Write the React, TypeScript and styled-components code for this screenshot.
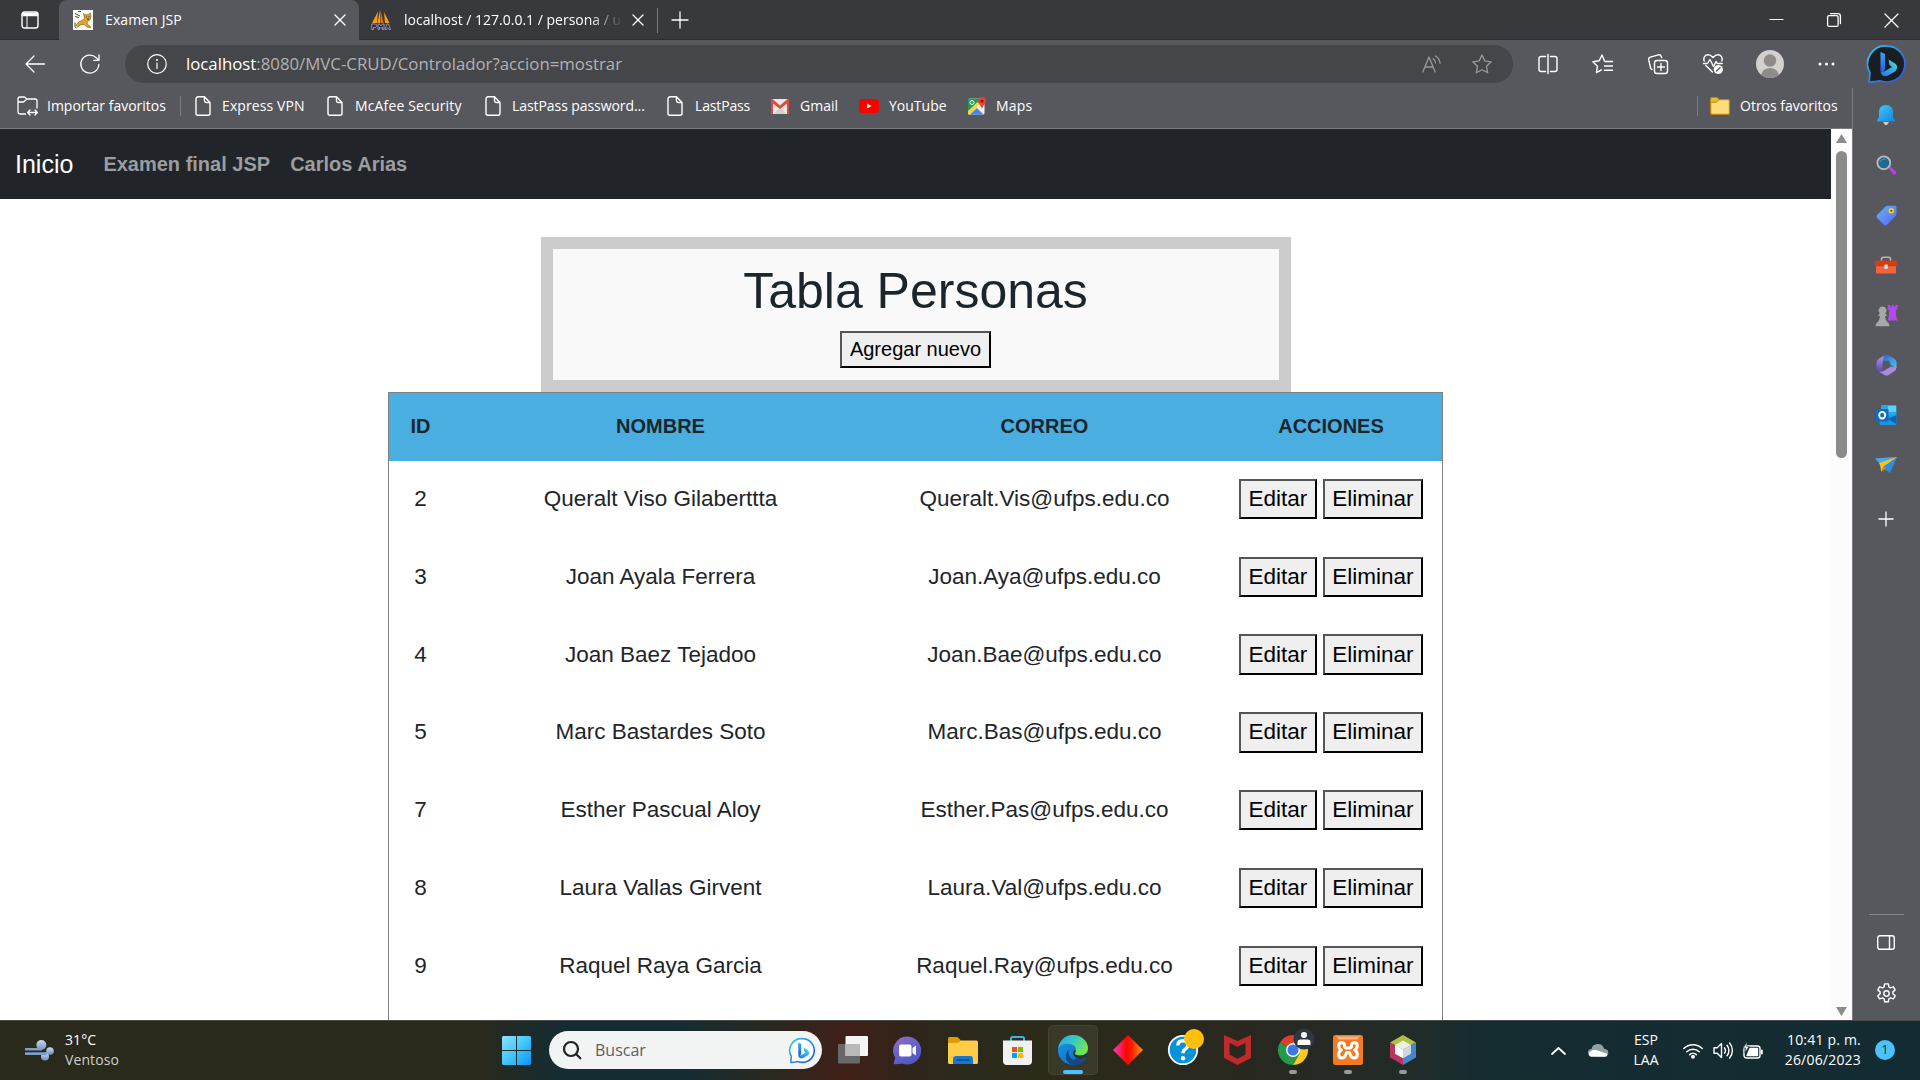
import React from "react";
import styled, { createGlobalStyle } from "styled-components";

const GlobalStyle = createGlobalStyle`
  * { box-sizing: border-box; }
  html, body { margin: 0; padding: 0; overflow: hidden; background: #fff; }
  svg { display: block; flex: none; overflow: visible; }
`;

const uiFont = `"Open Sans", "Noto Sans", sans-serif`;
const pageFont = `"Liberation Sans", Arial, sans-serif`;

/* ---------- shared ---------- */

const Desktop = styled.div`
  width: 1920px;
  height: 1080px;
  display: flex;
  flex-direction: column;
  overflow: hidden;
  font-family: ${uiFont};
  color: #fff;
`;

const Slot = styled.div<{ $w: number }>`
  width: ${(p) => p.$w}px;
  height: 100%;
  flex: none;
  display: flex;
  align-items: center;
  justify-content: center;
`;

const Divider = styled.div<{ $h: number }>`
  width: 1px;
  height: ${(p) => p.$h}px;
  flex: none;
  background: #7d7e81;
`;

/* ---------- tab strip ---------- */

const TabStrip = styled.header`
  height: 40px;
  flex: none;
  display: flex;
  align-items: stretch;
  background: #38393c;
  box-shadow: inset 0 -1px 0 #2d2e30;
`;

const Tab = styled.div<{ $active?: boolean; $w: number }>`
  width: ${(p) => p.$w}px;
  display: flex;
  align-items: center;
  padding: 0 14px 0 ${(p) => (p.$active ? 14 : 12)}px;
  border-radius: 8px 8px 0 0;
  background: ${(p) => (p.$active ? "#57585d" : "transparent")};
`;

const TabTitle = styled.span<{ $fade?: boolean; $ls?: number }>`
  flex: 1;
  margin-left: ${(p) => (p.$fade ? 13 : 12)}px;
  font-size: 14px;
  line-height: 20px;
  letter-spacing: ${(p) => p.$ls ?? 0}px;
  white-space: nowrap;
  overflow: hidden;
  ${(p) =>
    p.$fade &&
    "mask-image: linear-gradient(to right, #000 calc(100% - 44px), transparent calc(100% - 10px));"}
`;

const WindowControls = styled.div`
  margin-left: auto;
  display: flex;
`;

/* ---------- browser body ---------- */

const BrowserBody = styled.div`
  flex: 1;
  min-height: 0;
  display: flex;
  background: #57585d;
`;

const MainColumn = styled.div`
  width: 1852px;
  flex: none;
  display: flex;
  flex-direction: column;
`;

const Toolbar = styled.div`
  height: 48px;
  flex: none;
  display: flex;
  align-items: center;
  padding-left: 7px;
`;

const AddressBar = styled.div`
  width: 1388px;
  height: 38px;
  margin-left: 8px;
  margin-right: 7px;
  border-radius: 19px;
  background: #454649;
  display: flex;
  align-items: center;
  padding-left: 22px;
  padding-right: 6px;
`;

const Url = styled.span`
  flex: 1;
  margin-left: 19px;
  font-size: 16.8px;
  line-height: 24px;
  white-space: nowrap;
  color: #b1b2b4;
  b { font-weight: 400; color: #fff; }
`;

const Avatar = styled.div`
  width: 28px;
  height: 28px;
  border-radius: 50%;
  overflow: hidden;
  background: #d3d1ce;
`;

const BookmarksBar = styled.div`
  height: 41px;
  flex: none;
  display: flex;
  align-items: center;
  padding: 0 14px 4px 17px;
  border-bottom: 1px solid #7c7d80;
`;

const Bookmark = styled.div<{ $w: number; $gap: number; $ls?: number }>`
  width: ${(p) => p.$w}px;
  flex: none;
  display: flex;
  align-items: center;
  gap: ${(p) => p.$gap}px;
  font-size: 14px;
  line-height: 20px;
  letter-spacing: ${(p) => p.$ls ?? 0}px;
  white-space: nowrap;
`;

const OtherBookmarks = styled.div`
  margin-left: auto;
  display: flex;
  align-items: center;
  gap: 12px;
`;

/* ---------- edge sidebar ---------- */

const Sidebar = styled.aside`
  flex: 1;
  display: flex;
  flex-direction: column;
`;

const BingSlot = styled.div`
  height: 48px;
  display: flex;
  align-items: center;
  justify-content: center;
  padding-left: 1px;
`;

const SidebarRail = styled.div`
  flex: 1;
  border-left: 1px solid #7c7d80;
  display: flex;
  flex-direction: column;
  align-items: center;
  padding-top: 2px;
  padding-right: 1px;
`;

const RailItem = styled.div<{ $h?: number }>`
  height: ${(p) => p.$h ?? 50}px;
  display: flex;
  align-items: center;
`;

const RailFooter = styled.div`
  margin-top: auto;
  display: flex;
  flex-direction: column;
  align-items: center;
  padding-bottom: 3px;
`;

const RailLine = styled.div`
  width: 35px;
  height: 1px;
  background: #86878a;
`;

/* ---------- web page ---------- */

const Viewport = styled.div`
  flex: 1;
  min-height: 0;
  display: flex;
  background: #fff;
  overflow: hidden;
`;

const Page = styled.main`
  width: 1831px;
  display: flex;
  flex-direction: column;
  align-items: center;
  font-family: ${pageFont};
  color: #212529;
`;

const Navbar = styled.nav`
  width: 100%;
  height: 70px;
  flex: none;
  display: flex;
  align-items: center;
  padding-left: 15px;
  background: #212529;
`;

const Brand = styled.span`
  font-size: 25px;
  line-height: 38px;
  color: #fff;
  margin-right: 30px;
  padding-bottom: 1px;
`;

const NavLink = styled.span`
  font-size: 20px;
  line-height: 30px;
  font-weight: 700;
  color: #9b9d9f;
  margin-right: 20px;
`;

const TitleCard = styled.section`
  width: 750px;
  height: 155px;
  flex: none;
  margin-top: 38px;
  border: 12px solid #ccc;
  background: #f9f9f9;
  display: flex;
  flex-direction: column;
  align-items: center;
`;

const Title = styled.h1`
  margin: 12px 0 10px;
  font-size: 50px;
  line-height: 60px;
  font-weight: 400;
  color: #1b262c;
`;

const PageButton = styled.button<{ $large?: boolean }>`
  height: ${(p) => (p.$large ? "40.4px" : "37px")};
  padding: 0 7.5px ${(p) => (p.$large ? 0 : 2)}px;
  margin: 0;
  flex: none;
  display: flex;
  align-items: center;
  font-family: ${pageFont};
  font-size: ${(p) => (p.$large ? 22.5 : 20)}px;
  line-height: 26px;
  color: #000;
  background: #efefef;
  border: 2px solid;
  border-color: #555 #000 #000 #555;
  border-radius: 0;
`;

const Table = styled.div`
  width: 1055px;
  flex: none;
  border: 1px solid #808080;
`;

const Row = styled.div`
  height: 77.83px;
  display: grid;
  grid-template-columns: 63px 417px 351px 222px;
  align-items: center;
  justify-items: center;
  font-size: 22.5px;
  padding-bottom: 2px;
`;

const HeadRow = styled(Row)`
  height: 68px;
  background: #4aaee0;
  color: #1b262c;
  font-size: 20px;
  font-weight: 700;
  padding-bottom: 1px;
`;

const Actions = styled.div`
  display: flex;
  gap: 6px;
`;

const Scrollbar = styled.div`
  width: 21px;
  display: flex;
  flex-direction: column;
  align-items: center;
  background: #fcfcfc;
  padding: 5px 0 4px;
`;

const Thumb = styled.div`
  width: 11px;
  height: 307px;
  margin: 8px 0 auto;
  border-radius: 6px;
  background: #8b8b8b;
`;

/* ---------- taskbar ---------- */

const Taskbar = styled.footer`
  height: 60px;
  flex: none;
  display: flex;
  align-items: center;
  padding-bottom: 1px;
  border-top: 1px solid #464c45;
  background: linear-gradient(
    to right,
    #29291c 0px,
    #29291c 480px,
    #152c32 560px,
    #152c33 680px,
    #29281f 770px,
    #402018 845px,
    #30241a 905px,
    #2b291c 960px,
    #2c2a18 1050px,
    #282820 1250px,
    #222b27 1400px,
    #152c31 1490px,
    #132b32 1920px
  );
`;

const Weather = styled.div`
  width: 494px;
  display: flex;
  align-items: center;
  gap: 11px;
  padding-left: 25px;
`;

const TwoLines = styled.div<{ $align?: string; $ls?: number }>`
  font-size: 14px;
  line-height: 20px;
  padding-bottom: 1px;
  text-align: ${(p) => p.$align ?? "left"};
  letter-spacing: ${(p) => p.$ls ?? 0}px;
  white-space: nowrap;
`;

const Muted = styled.div`
  color: #cfcfca;
`;

const SearchBox = styled.div`
  width: 273px;
  height: 38px;
  margin-left: 10px;
  margin-right: 3px;
  border-radius: 19px;
  background: #f2f3f3;
  display: flex;
  align-items: center;
  padding: 0 7px 0 14px;
  span {
    flex: 1;
    margin-left: 14px;
    font-size: 16px;
    line-height: 22px;
    color: #5f5f5f;
  }
`;

const AppSlot = styled.div`
  width: 55px;
  height: 58px;
  display: flex;
  align-items: center;
  justify-content: center;
`;

const AppTile = styled.div<{ $active?: boolean }>`
  position: relative;
  width: 50px;
  height: 50px;
  border-radius: 5px;
  display: flex;
  align-items: center;
  justify-content: center;
  background: ${(p) => (p.$active ? "rgba(255,255,255,0.07)" : "transparent")};
  box-shadow: ${(p) => (p.$active ? "inset 0 0 0 1px rgba(255,255,255,0.06)" : "none")};
`;

const RunMark = styled.div<{ $active?: boolean }>`
  position: absolute;
  bottom: 1px;
  left: 50%;
  width: ${(p) => (p.$active ? 20 : 8)}px;
  height: 4px;
  transform: translateX(-50%);
  border-radius: 2px;
  background: ${(p) => (p.$active ? "#4cc2ff" : "#9a9b98")};
`;

const Tray = styled.div`
  margin-left: auto;
  height: 100%;
  display: flex;
  align-items: center;
  padding-right: 25px;
`;

const Clock = styled.div`
  width: 93px;
  display: flex;
  justify-content: flex-end;
`;

const Notice = styled.div`
  width: 20px;
  height: 20px;
  margin-left: 14px;
  border-radius: 50%;
  background: #4cc2ff;
  color: #10242c;
  font-size: 12px;
  line-height: 20px;
  text-align: center;
`;

/* ---------- line icons ---------- */

type LineProps = { w: number; h: number; sw?: number; color?: string; children: React.ReactNode };
const Line = ({ w, h, sw = 1.4, color = "#fff", children }: LineProps) => (
  <svg width={w} height={h} viewBox={`0 0 ${w} ${h}`} fill="none" stroke={color} strokeWidth={sw} strokeLinecap="round" strokeLinejoin="round">
    {children}
  </svg>
);

const WorkspaceIcon = () => (
  <Line w={18} h={18} sw={1.4}>
    <rect x="1" y="1" width="16" height="16" rx="2.5" />
    <path d="M1.5 2.5h15v2h-15z" fill="#fff" />
    <path d="M6 5v12" strokeWidth="1" />
  </Line>
);
const CloseIcon = ({ s = 10 }: { s?: number }) => (
  <Line w={s} h={s} sw={1.3}><path d={`M0 0L${s} ${s}M${s} 0L0 ${s}`} /></Line>
);
const PlusIcon = ({ s = 16 }: { s?: number }) => (
  <Line w={s} h={s} sw={1.3}><path d={`M${s / 2} 0V${s}M0 ${s / 2}H${s}`} /></Line>
);
const BackIcon = () => (
  <Line w={20} h={18} sw={1.3}><path d="M19.5 9H1M9 1L1 9l8 8" /></Line>
);
const ReloadIcon = () => (
  <Line w={20} h={20} sw={1.3}><path d="M18.8 10.5a9 9 0 1 1-2.6-6.8L18.6 6M19 1v5.3h-5.3" /></Line>
);
const InfoIcon = () => (
  <Line w={20} h={20} sw={1.2}><circle cx="10" cy="10" r="9.3" /><path d="M10 9v5.5" /><circle cx="10" cy="6" r=".4" fill="#fff" /></Line>
);
const ReadAloudIcon = () => (
  <Line w={20} h={18} color="#98999b" sw={1.3}><path d="M.8 17L7 2l6.200 15M3 12h8M11 3.800c1.500 1 2.300 2.300 2.400 4M13.500 1c2.800 1.800 4.200 4 4.600 7.200" /></Line>
);
const starPath = "M10 1l2.800 5.900 6.400.9-4.700 4.500 1.200 6.500L10 15.700l-5.700 3.100 1.200-6.500L.8 7.800l6.400-.9z";
const StarIcon = () => <Line w={20} h={20} color="#98999b" sw={1.3}><path d={starPath} /></Line>;
const SplitIcon = () => (
  <Line w={20} h={20}><path d="M7.500 2.500H3A2 2 0 0 0 1 4.500v11a2 2 0 0 0 2 2h4.500M12.500 2.500H17a2 2 0 0 1 2 2v11a2 2 0 0 1-2 2h-4.500M10 .5v19" /></Line>
);
const FavoritesIcon = () => (
  <Line w={21} h={20}><path d="M12.500 7L10 1 7.200 6.800.8 7.700l4.700 4.500-1.100 6.500 5-2.800M13 7.500h7.500M12.500 12h8M12.500 16.300h8" /></Line>
);
const CollectionsIcon = () => (
  <Line w={20} h={20}><rect x="6.500" y="6.500" width="13" height="13" rx="2.600" /><path d="M13 9.500v7M9.500 13h7M4 15.500l-1.300-1L.7 5.800c-.2-1.300.3-2.300 1.600-2.700L10.500.8c1.400-.3 2.300.3 2.800 1.800l.3 1" /></Line>
);
const HealthIcon = () => (
  <Line w={20} h={20}>
    <path d="M1.200 7C-.2 3.500 2.200.8 5 .8c2.300 0 3.700 1.200 5 2.700C11.300 2 12.700.8 15 .8c2.800 0 5.200 2.700 3.800 6.200M2.800 11.500L9.500 18M.5 9.500h4L7 5.500l3.500 7 2.500-5 1.200 2h5" />
    <circle cx="15.300" cy="15.500" r="4.600" fill="#fff" stroke="none" />
    <path d="M13.500 17l3.500-3.200" stroke="#57585d" />
  </Line>
);
const PageIcon = () => (
  <Line w={16} h={20} sw={1.4}><path d="M9.500.8H3a2 2 0 0 0-2 2v14.400a2 2 0 0 0 2 2h10a2 2 0 0 0 2-2V6.500zM9.500.8v4a1.700 1.700 0 0 0 1.700 1.700H15" /></Line>
);
const ImportIcon = () => (
  <Line w={21} h={20} sw={1.3}>
    <path d="M8.500 18H3a2 2 0 0 1-2-2V3a2 2 0 0 1 2-2h4.500L10 3h8a2 2 0 0 1 2 2v7M1 6h5.500L10 3M11 16.500h9M13 14l-2.300 2.500L13 19M18 14l2.300 2.500L18 19" />
  </Line>
);
const PanelIcon = () => (
  <Line w={18} h={15}><rect x=".7" y=".7" width="16.600" height="13.600" rx="2.200" /><path d="M12.500 1v13" /></Line>
);
const GearIcon = () => (
  <Line w={21} h={21}>
    <circle cx="10.500" cy="10.500" r="2.700" />
    <path d="M8.700.9h3.600l.6 3 1.600.9 2.900-1 1.800 3.100-2.300 2v1.900l2.300 2-1.800 3.100-2.900-1-1.600.9-.6 3H8.700l-.6-3-1.600-.9-2.900 1-1.800-3.100 2.300-2v-1.900l-2.300-2 1.800-3.100 2.900 1 1.600-.9z" />
  </Line>
);

/* ---------- colour icons ---------- */

const TomcatIcon = () => (
  <svg width="20" height="20" viewBox="0 0 20 20">
    <rect width="20" height="20" fill="#fdfdf8" />
    <path d="M10.500 3.500l1.500 1.200h3L17.500 3l.5 4-1 3-2.500 1.500L14 14l3 2 .5 1.800-3.500-.6-3-3-3.500.8L4.500 17 3 15.500 5.500 12l3.500-1.500 2.500-2z" fill="#dfa233" stroke="#7a5a1c" strokeWidth=".6" />
    <path d="M2 3.500l5 2.500M2 6.500l4 1M2 12.500v4.500l1.500 1M5 1.500h3" stroke="#474636" strokeWidth="1" fill="none" />
    <path d="M12.800 7h1M15.500 6.800h1M14 9h2" stroke="#30281a" strokeWidth="1" />
  </svg>
);
const PmaIcon = () => (
  <svg width="20" height="20" viewBox="0 0 20 20">
    <path d="M7 1.500L1 13h5zM9 0v13H6.500zM13 2l5.500 11H14z" fill="#f89c0e" />
    <path d="M9.500 0l3 13H9.500z" fill="#e8700a" />
    <g fill="#26284a" stroke="#a6a8d4" strokeWidth=".8">
      <path d="M.8 19.500v-5.500h3.400c1.800 0 1.800 3.400 0 3.400H2.500v2.100zM7 19.500v-5.500h1.500l1.500 2 1.500-2H13v5.500h-1.500v-2.500L10 18.500l-1.500-1.500v2.500zM14 19.500l2-5.500h1.500l2 5.500h-1.500l-1.200-2-1.300 2z" />
    </g>
  </svg>
);
const GmailIcon = () => (
  <svg width="18" height="15" viewBox="0 0 18 15">
    <rect width="18" height="15" rx="1.500" fill="#e9e8e7" />
    <path d="M2.500 15L9 8l6.500 7z" fill="#d4d3d2" />
    <path d="M0 1.500C0 .5.700 0 1.500 0L9 6.500 16.500 0c.8 0 1.500.5 1.500 1.500V15h-2V4.500L9 10 2 4.500V15H0z" fill="#dd4b3e" />
  </svg>
);
const YouTubeIcon = () => (
  <svg width="20" height="14" viewBox="0 0 20 14"><rect width="20" height="14" rx="3.500" fill="#f00" /><path d="M8 4.500v5L12.500 7z" fill="#fff" /></svg>
);
const MapsIcon = () => (
  <svg width="18" height="18" viewBox="0 0 18 18">
    <rect x="0" y="1.500" width="16.500" height="16" rx="1.500" fill="#f1f1ee" />
    <path d="M0 3a1.500 1.500 0 0 1 1.500-1.500H15L0 17z" fill="#1f9d58" />
    <path d="M0 14L9.500 5l2 2.500-9 10H1a1 1 0 0 1-1-1z" fill="#fdd835" />
    <path d="M2 17.500L9 11l6.500 6.500z" fill="#4285f4" />
    <circle cx="4" cy="5.500" r="2" fill="none" stroke="#fff" strokeWidth="1" />
    <path d="M14 0a4 4 0 0 1 4 4c0 2.500-2.800 4-4 8-1.200-4-4-5.500-4-8a4 4 0 0 1 4-4z" fill="#e94435" />
    <circle cx="14" cy="4" r="1.500" fill="#811411" />
  </svg>
);
const FolderMini = () => (
  <svg width="20" height="18" viewBox="0 0 20 18">
    <path d="M.7 4V2A1.500 1.500 0 0 1 2.200.6H7l2 2h9a1.500 1.500 0 0 1 1.400 1.500V16a1.500 1.500 0 0 1-1.500 1.400H2.200A1.500 1.500 0 0 1 .7 16z" fill="#ffdc7c" stroke="#b98a16" strokeWidth="1.200" />
    <path d="M1.300 1.800Q1.500 1.200 2.200 1.200h4.500l2 2-2.500 1.900H1.300z" fill="#f0b91f" />
    <path d="M1 5.200h5.300L8.800 3" fill="none" stroke="#b98a16" />
  </svg>
);
const BingBubble = ({ s, dark }: { s: number; dark?: boolean }) => {
  const id = dark ? "bd" : "bl";
  return (
    <svg width={s} height={s} viewBox="0 0 38 38">
      <defs>
        <linearGradient id={id} x1="0" y1="0" x2="1" y2="1"><stop offset="0" stopColor="#2bd3ee" /><stop offset=".55" stopColor="#2b7de9" /><stop offset="1" stopColor="#2458d8" /></linearGradient>
        <linearGradient id={id + "s"} x1="0" y1="0" x2="0" y2="1"><stop offset="0" stopColor="#38a8f5" /><stop offset="1" stopColor="#1d57e8" /></linearGradient>
        <linearGradient id={id + "c"} x1="0" y1="1" x2="1" y2="0"><stop offset="0" stopColor="#2a6cf0" /><stop offset="1" stopColor="#3fe3d8" /></linearGradient>
      </defs>
      <path d="M19 1a18 18 0 1 1-6 35c-2-.6-3 .2-5 .5l-6 .7c-.8 0-1-.5-.8-1.200L2 28A18 18 0 0 1 19 1z" fill={dark ? "#1c1d20" : "#fff"} stroke={`url(#${id})`} strokeWidth={dark ? 1.8 : 2.4} />
      <path d="M12.500 7l4.500 2v15l-2 5-2.500-3z" fill={`url(#${id}s)`} />
      <path d="M20.500 14.500l6.500 4c3 2 2.500 6 0 8L20 30.500c-3 1.500-6.500.5-7.500-3.500l2.500.3L24 22l-2.500-2z" fill={`url(#${id}c)`} />
    </svg>
  );
};

const BellIcon = () => (
  <svg width="20" height="22" viewBox="0 0 20 22">
    <defs><linearGradient id="bell" x1="0" y1="0" x2="1" y2="1"><stop offset="0" stopColor="#43c8fa" /><stop offset="1" stopColor="#1384dc" /></linearGradient></defs>
    <path d="M7 18h6l-1.500 2.500q-1.500 1-3 0z" fill="#c8c8c8" />
    <path d="M10 1c4.500 0 7 3.200 7 7v5l2 3.500q.2 1-1 1H2q-1.200 0-1-1L3 13V8c0-3.800 2.500-7 7-7z" fill="url(#bell)" />
  </svg>
);
const SearchColor = () => (
  <svg width="21" height="21" viewBox="0 0 21 21">
    <path d="M12.500 13l2-1.500 5.500 5.200q.8 1-.2 2.200t-2.300.6z" fill="#bd3bf0" />
    <circle cx="7.800" cy="7.800" r="6.400" fill="#25678f" stroke="#b7babb" strokeWidth="1.900" />
    <path d="M4.500 7a3.500 3.500 0 0 1 5-2.500" stroke="#4c9cc6" strokeWidth="1" fill="none" />
  </svg>
);
const TagIcon = () => (
  <svg width="21" height="21" viewBox="0 0 21 21">
    <defs><linearGradient id="tag" x1="0" y1="0" x2="1" y2="1"><stop offset="0" stopColor="#6bb0f8" /><stop offset="1" stopColor="#5766f4" /></linearGradient></defs>
    <path d="M11.500.8h7.200Q20.500.8 20.500 2.500V9q0 1-.8 1.800L11 19.800q-1.500 1.200-3 0L1 12.800q-1-1.500 0-2.800L9.700 1.500Q10.500.8 11.500.8z" fill="url(#tag)" />
    <circle cx="15.300" cy="5.800" r="2.700" fill="#fbd014" /><circle cx="15.300" cy="5.800" r="1" fill="#4b4a20" />
  </svg>
);
const ToolboxIcon = () => (
  <svg width="22" height="18" viewBox="0 0 22 18">
    <path d="M6.500 5V3q0-1.800 1.800-1.800h5.400q1.800 0 1.800 1.800v2" stroke="#b8b8b8" strokeWidth="1.600" fill="none" />
    <rect x="1" y="8" width="20" height="9.500" rx="1.300" fill="#f0633c" /><rect x="0" y="4.600" width="22" height="5.600" rx="1.200" fill="#cf3f12" />
    <rect x="9.300" y="8.500" width="3.500" height="4.500" rx="1" fill="#dadada" />
  </svg>
);
const ChessIcon = () => (
  <svg width="23" height="23" viewBox="0 0 23 23">
    <path d="M13 .8h2v1.700h1.800V.8h2v1.700h1.700V.8H23l-.8 4.700-1.400 1 .5 6.500 1.200 3.500h-10l1.200-3.500.6-6.500-1.500-1z" fill="#b547ee" />
    <path d="M7.500 2.500a4 4 0 0 1 2.700 7l1.300 1v1.500H10q.2 4 2 5.700 2.500 1.300 2.500 4.500H.5q0-3.200 2.500-4.500 1.800-1.700 2-5.700H3.500v-1.500l1.300-1a4 4 0 0 1 2.700-7z" fill="#a7a7a7" />
  </svg>
);
const M365Icon = () => (
  <svg width="21" height="22" viewBox="0 0 21 22">
    <defs>
      <linearGradient id="m1" x1="0" y1="0" x2="1" y2="1"><stop offset="0" stopColor="#2b67c8" /><stop offset="1" stopColor="#4fc3f7" /></linearGradient>
      <linearGradient id="m2" x1="0" y1="0" x2="0" y2="1"><stop offset="0" stopColor="#b69ae8" /><stop offset="1" stopColor="#4c3fae" /></linearGradient>
    </defs>
    <path d="M10 .8L3 4.500Q.5 6 .5 9v5.500q0 2 1.800 3.200l3.200 2Q6.500 20 6.500 18V9Q6.500 6 9 4.500z" fill="url(#m2)" />
    <path d="M8.500 1.200q2-1 4 0L18 4.500q2.500 1.500 2.500 4V14L14 10.500V9q0-1.500-2-2.500L7.500 7V4q0-1.800 1-2.800z" fill="url(#m1)" />
    <path d="M20.500 13q0 3-2.500 4.500L12.500 21q-2 1-4 0l-6-3.500q3 .8 5-.5L15 12.500z" fill="#a98ade" />
  </svg>
);
const OutlookIcon = () => (
  <svg width="21" height="21" viewBox="0 0 21 21">
    <rect x="5" y="0" width="15.500" height="13" rx="1" fill="#2ca7e6" /><rect x="12" y="1" width="8" height="6" fill="#5cd2fa" />
    <path d="M3.500 10.500H20.500V19a1 1 0 0 1-1 1h-15a1 1 0 0 1-1-1z" fill="#1b95dd" /><path d="M12 14l8.500-4v9z" fill="#1162a8" />
    <rect x="0" y="4" width="12.500" height="12.500" rx="1.300" fill="#0d6cc4" />
    <ellipse cx="6.200" cy="10.200" rx="3" ry="3.300" fill="none" stroke="#fff" strokeWidth="1.900" />
  </svg>
);
const PlaneIcon = () => (
  <svg width="22" height="16" viewBox="0 0 22 16">
    <path d="M0 1.500L22 0 15 16l-6.500-4.500z" fill="#2d8ee6" /><path d="M0 1.500L22 0 6 7z" fill="#4ba6f0" />
    <path d="M4 6L22 0 8.500 9.500 6.500 15 5 8z" fill="#f8c21c" /><path d="M8.500 9.500L11 11.500 6.500 15z" fill="#c98b12" />
  </svg>
);

/* taskbar */

const WindIcon = () => (
  <svg width="29" height="21" viewBox="0 0 29 21">
    <defs><linearGradient id="wind" x1="0" y1="0" x2="0" y2="1"><stop offset="0" stopColor="#c7d9f2" /><stop offset="1" stopColor="#6f93bf" /></linearGradient></defs>
    <circle cx="16.300" cy="5" r="5" fill="url(#wind)" /><circle cx="25" cy="11" r="3.800" fill="url(#wind)" /><circle cx="20" cy="16.500" r="4" fill="url(#wind)" />
    <path d="M0 9.300h17M0 13.600h22" stroke="#7f9dc6" strokeWidth="2.600" />
  </svg>
);
const WindowsIcon = () => (
  <svg width="29" height="29" viewBox="0 0 29 29">
    <defs><linearGradient id="win" gradientUnits="userSpaceOnUse" x1="0" y1="0" x2="29" y2="29"><stop offset="0" stopColor="#8ae4ff" /><stop offset=".5" stopColor="#41c6fd" /><stop offset="1" stopColor="#0c93f8" /></linearGradient></defs>
    <path d="M1 0h13v14H0V1zM15 0h13l1 1v13H15zM0 15h14v14H1l-1-1zM15 15h14v13l-1 1H15z" fill="url(#win)" />
  </svg>
);
const TaskViewIcon = () => (
  <svg width="30" height="28" viewBox="0 0 30 28"><rect y="8" width="22" height="19.500" rx="1" fill="#686868" /><rect x="7.500" width="22.500" height="20" rx="1" fill="#f4f4f4" /><path d="M7.500 8H22v12H7.500z" fill="#b9b9b9" /></svg>
);
const ChatIcon = () => (
  <svg width="29" height="29" viewBox="0 0 29 29">
    <defs><linearGradient id="chat" x1="0" y1="0" x2=".6" y2="1"><stop offset="0" stopColor="#a06cb4" /><stop offset=".5" stopColor="#6a62cc" /><stop offset="1" stopColor="#5058c4" /></linearGradient></defs>
    <path d="M14.500.5a14 14 0 1 1-5.500 27q-3.500.8-7.500.7-1.200-.2-.7-1.500l1.400-5A14 14 0 0 1 14.500.5z" fill="url(#chat)" />
    <rect x="6" y="8.500" width="12.500" height="12" rx="2" fill="#fff" /><path d="M19.500 12l3.500-2.500v10L19.500 17z" fill="#fff" />
  </svg>
);
const ExplorerIcon = () => (
  <svg width="30" height="27" viewBox="0 0 30 27">
    <path d="M0 1.500Q0 0 1.500 0h8L13 3.500V8H0z" fill="#de9a08" />
    <path d="M0 6l10.500-.3L13 3.500h15.500Q30 3.500 30 5v20.500q0 1.500-1.500 1.500h-27Q0 27 0 25.500z" fill="#ffcc48" />
    <path d="M5 27v-5q0-3 3-3h14q3 0 3 3v5z" fill="#1577cf" /><path d="M8.500 23h13" stroke="#0c4c8f" strokeWidth="1.500" />
  </svg>
);
const StoreIcon = () => (
  <svg width="29" height="29" viewBox="0 0 29 29">
    <path d="M8 6V2.500Q8 1 9.500 1h10Q21 1 21 2.500V6" stroke="#32b5ea" strokeWidth="2" fill="none" />
    <path d="M0 4.500h29V25q0 4-4 4H4q-4 0-4-4z" fill="#f1f1f1" />
    <path d="M9 11h5v5H9z" fill="#f25022" /><path d="M15 11h5v5h-5z" fill="#7fba00" /><path d="M9 17h5v5H9z" fill="#00a4ef" /><path d="M15 17h5v5h-5z" fill="#ffb900" />
  </svg>
);
const EdgeIcon = () => (
  <svg width="30" height="30" viewBox="0 0 30 30">
    <defs>
      <linearGradient id="e1" x1="0" y1="0" x2="1" y2=".5"><stop offset="0" stopColor="#28a8e2" /><stop offset=".5" stopColor="#35c8c4" /><stop offset="1" stopColor="#74e54f" /></linearGradient>
      <linearGradient id="e2" x1="0" y1="0" x2="1" y2="1"><stop offset="0" stopColor="#1a9be3" /><stop offset="1" stopColor="#0c63be" /></linearGradient>
    </defs>
    <circle cx="15" cy="15" r="15" fill="url(#e2)" />
    <path d="M11 14c-2 5 1 10.500 7 11.500 4 .6 7-.4 10-2.500-3 5-8 7.500-14.500 7C7.500 27 6 20 11 14z" fill="#114a8b" />
    <path d="M.3 13C1.500 5.500 7.500 0 15 0c8 0 15 6 15 13 0 5-4 7.500-8 7.500-3.500 0-5.500-1.200-5-2.500 2-2 1.500-6-2-8C10 7.500 3 8.500.3 13z" fill="url(#e1)" />
    <path d="M17 18c-.5 1.300 1.500 2.500 5 2.500 3 0 5.500-1 7.500-3 1 2-.5 4.500-1.500 5.500-3 1.500-6.500 1.500-9 .2-4.500-2-4.500-6.200-2.500-8.200q1.500 1 .5 3z" fill="#33342a" />
    <path d="M19 23.200c3 1.200 6 1 8.500-.4l1.300.3Q27 27 22 28.500L14 26z" fill="#114a8b" />
  </svg>
);
const DiamondIcon = () => (
  <svg width="30" height="30" viewBox="0 0 30 30">
    <defs><linearGradient id="dia"><stop offset="0" stopColor="#f43cc0" /><stop offset=".45" stopColor="#fe0505" /><stop offset=".6" stopColor="#fb1a02" /><stop offset="1" stopColor="#ff9710" /></linearGradient></defs>
    <path d="M15 0l15 15-15 15L0 15z" fill="url(#dia)" />
  </svg>
);
const HelpIcon = () => (
  <svg width="30" height="30" viewBox="0 0 30 30">
    <circle cx="15" cy="15" r="14.200" fill="#0793dc" stroke="#f5f8fa" strokeWidth="1.800" />
    <path d="M9.800 10.500q.3-4.700 5-4.700 5 0 5 4.300 0 2.500-2.500 4-2.300 1.400-2.300 4.200" stroke="#fff" strokeWidth="3.400" fill="none" /><circle cx="15" cy="23.300" r="2.200" fill="#fff" />
    <circle cx="26" cy="4" r="10" fill="#ffbf0b" />
  </svg>
);
const McAfeeIcon = () => (
  <svg width="27" height="30" viewBox="0 0 27 30"><path d="M0 0l13.500 6L27 0v23l-13.500 7L0 23zM5.500 8v11.500l8 4.300 8-4.300V8l-8 3.700z" fill="#bd2b2b" fillRule="evenodd" /></svg>
);
const ChromeIcon = () => (
  <svg width="30" height="30" viewBox="0 0 30 30">
    <path d="M15 15L2 7.500A15 15 0 0 1 28 7.500z" fill="#e33b2e" /><path d="M15 15L2 7.500A15 15 0 0 0 15 30l6.500-11.200z" fill="#259a48" /><path d="M28 7.500A15 15 0 0 1 15 30l6.500-11.200L15 7.500z" fill="#fccb1c" />
    <circle cx="15" cy="15" r="7" fill="#fff" /><circle cx="15" cy="15" r="5.600" fill="#3b78e7" />
    <circle cx="26" cy="4" r="10.500" fill="#2b3942" /><circle cx="26" cy="0" r="3" fill="#fff" /><path d="M19.500 10V7q0-2.500 3-2.500h7q3 0 3 2.500v3z" fill="#fff" />
  </svg>
);
const XamppIcon = () => (
  <svg width="30" height="30" viewBox="0 0 30 30">
    <rect width="30" height="30" rx="2.500" fill="#f47b26" /><path d="M3 1.500h24l-3 3H6z" fill="#f9b183" />
    <path d="M11.500 11.800V10Q11 7.500 8.500 7.500 5.700 8 5.700 11q0 2.500 2.600 4-2.600 1.500-2.600 4.500 0 3.500 3.300 3.500 2.500 0 3.500-2.800l1.200-2.700h2.600l1.200 2.700q1 2.800 3.500 2.800 3.300 0 3.300-3.500 0-3-2.600-4.500 2.600-1.500 2.600-4 0-3-2.800-3.500-2.500 0-3 2.500v1.800l-1.200 1.200h-4.600z" stroke="#fff" strokeWidth="3" fill="none" strokeLinejoin="round" strokeLinecap="round" />
  </svg>
);
const NetBeansIcon = () => (
  <svg width="26" height="30" viewBox="0 0 26 30">
    <path d="M13 0l13 7.500-13 7-13-7z" fill="#aebf45" /><path d="M0 7.500l13 7V30L0 22.500z" fill="#b9345f" /><path d="M26 7.500l-13 7V30l13-7.500z" fill="#4387cf" />
    <path d="M13 5.500l8 4.500-8 4.500L5 10z" fill="#eef0df" /><path d="M5 10l8 4.500v8.700l-8-4.400z" fill="#fff" /><path d="M21 10l-8 4.500v8.700l8-4.400z" fill="#ccd8e2" />
  </svg>
);
const CloudIcon = () => (
  <svg width="20" height="13" viewBox="0 0 20 13"><path d="M3.500 12a3.500 3.500 0 0 1 0-7A6.500 6.500 0 0 1 16 4.500l.5.500a3.700 3.700 0 0 1 0 7.500z" fill="#93a0a3" /><path d="M3 12.800a3 3 0 0 1-.5-5.500Q6 4.500 9.500 6.500l9.300 3.200q1.200 3-2 3.100z" fill="#fff" /></svg>
);
const WifiIcon = () => (
  <Line w={20} h={15} sw={1.5}><path d="M.8 5.500a13 13 0 0 1 18.400 0M3.800 8.700a8.800 8.800 0 0 1 12.400 0M6.700 11.600a4.700 4.700 0 0 1 6.600 0" /><circle cx="10" cy="13.800" r="1.200" fill="#fff" /></Line>
);
const VolumeIcon = () => (
  <Line w={20} h={17} sw={1.4}><path d="M1 5.800h3.200L8.500 1.500v14l-4.300-4.300H1zM11.500 5.800a4.500 4.500 0 0 1 0 5.400M14 3.300a8 8 0 0 1 0 10.400M16.600 1a11.500 11.500 0 0 1 0 15" /></Line>
);
const BatteryIcon = () => (
  <Line w={20} h={17} sw={1.4}><rect x="1" y="4" width="16" height="12" rx="2.500" /><path d="M7 6.500h7.500v7H4z" fill="#fff" /><path d="M18.800 8.500v3" strokeWidth="2" /><path d="M4 0L.3 6h2.200L1.800 10.500 6.200 4.500H4z" fill="#fff" stroke="#132b32" strokeWidth=".6" /></Line>
);

/* ---------- data ---------- */

const people = [
  [2, "Queralt Viso Gilaberttta", "Queralt.Vis@ufps.edu.co"],
  [3, "Joan Ayala Ferrera", "Joan.Aya@ufps.edu.co"],
  [4, "Joan Baez Tejadoo", "Joan.Bae@ufps.edu.co"],
  [5, "Marc Bastardes Soto", "Marc.Bas@ufps.edu.co"],
  [7, "Esther Pascual Aloy", "Esther.Pas@ufps.edu.co"],
  [8, "Laura Vallas Girvent", "Laura.Val@ufps.edu.co"],
  [9, "Raquel Raya Garcia", "Raquel.Ray@ufps.edu.co"],
] as const;

const bookmarks = [
  { label: "Express VPN", w: 132, gap: 11, ls: 0.1, icon: <PageIcon /> },
  { label: "McAfee Security", w: 158, gap: 12, ls: 0.15, icon: <PageIcon /> },
  { label: "LastPass password...", w: 182, gap: 11, ls: -0.07, icon: <PageIcon /> },
  { label: "LastPass", w: 104, gap: 12, ls: -0.15, icon: <PageIcon /> },
  { label: "Gmail", w: 88, gap: 11, icon: <GmailIcon /> },
  { label: "YouTube", w: 109, gap: 10, icon: <YouTubeIcon /> },
  { label: "Maps", w: 80, gap: 10, ls: 0.2, icon: <MapsIcon /> },
];

const railIcons = [<SearchColor />, <TagIcon />, <ToolboxIcon />, <ChessIcon />, <M365Icon />, <OutlookIcon />, <PlaneIcon />];

const apps: { icon: React.ReactNode; active?: boolean; running?: boolean }[] = [
  { icon: <TaskViewIcon /> },
  { icon: <ChatIcon /> },
  { icon: <ExplorerIcon /> },
  { icon: <StoreIcon /> },
  { icon: <EdgeIcon />, active: true, running: true },
  { icon: <DiamondIcon /> },
  { icon: <HelpIcon /> },
  { icon: <McAfeeIcon /> },
  { icon: <ChromeIcon />, running: true },
  { icon: <XamppIcon />, running: true },
  { icon: <NetBeansIcon />, running: true },
];

export default function App() {
  return (
    <Desktop>
      <GlobalStyle />
      <TabStrip>
        <Slot $w={59}><WorkspaceIcon /></Slot>
        <Tab $active $w={300}>
          <TomcatIcon />
          <TabTitle $ls={0.1}>Examen JSP</TabTitle>
          <CloseIcon />
        </Tab>
        <Tab $w={298}>
          <PmaIcon />
          <TabTitle $fade>localhost / 127.0.0.1 / persona / u</TabTitle>
          <CloseIcon />
        </Tab>
        <Slot $w={1}><Divider $h={25} /></Slot>
        <Slot $w={43}><PlusIcon /></Slot>
        <WindowControls>
          <Slot $w={57}><Line w={13} h={2} sw={1.2}><path d="M0 .5h13" /></Line></Slot>
          <Slot $w={57}><Line w={14} h={14} sw={1.3}><rect x=".6" y="2.600" width="10.500" height="10.800" rx="1.500" /><path d="M3.500.6h7.500a2.400 2.400 0 0 1 2.400 2.400v7.500" /></Line></Slot>
          <Slot $w={58}><CloseIcon s={13} /></Slot>
        </WindowControls>
      </TabStrip>

      <BrowserBody>
        <MainColumn>
          <Toolbar>
            <Slot $w={55}><BackIcon /></Slot>
            <Slot $w={55}><ReloadIcon /></Slot>
            <AddressBar>
              <InfoIcon />
              <Url><b>localhost</b>:8080/MVC-CRUD/Controlador?accion=mostrar</Url>
              <Slot $w={50}><ReadAloudIcon /></Slot>
              <Slot $w={50}><StarIcon /></Slot>
            </AddressBar>
            <Slot $w={55}><SplitIcon /></Slot>
            <Slot $w={55}><FavoritesIcon /></Slot>
            <Slot $w={55}><CollectionsIcon /></Slot>
            <Slot $w={55}><HealthIcon /></Slot>
            <Slot $w={60}>
              <Avatar>
                <svg width="28" height="28" viewBox="0 0 28 28" fill="#8f8b87"><circle cx="14" cy="10.500" r="6.200" /><path d="M5 28q0-10 9-10t9 10z" /></svg>
              </Avatar>
            </Slot>
            <Slot $w={52}><svg width="17" height="4" viewBox="0 0 17 4" fill="#fff"><circle cx="2" cy="2" r="1.500" /><circle cx="8.500" cy="2" r="1.500" /><circle cx="15" cy="2" r="1.500" /></svg></Slot>
          </Toolbar>
          <BookmarksBar>
            <Bookmark $w={163} $gap={9}><ImportIcon />Importar favoritos</Bookmark>
            <Bookmark $w={15} $gap={0}><Divider $h={20} /></Bookmark>
            {bookmarks.map((b) => (
              <Bookmark key={b.label} $w={b.w} $gap={b.gap} $ls={b.ls}>{b.icon}{b.label}</Bookmark>
            ))}
            <OtherBookmarks>
              <Divider $h={20} />
              <Bookmark $w={128} $gap={10}><FolderMini />Otros favoritos</Bookmark>
            </OtherBookmarks>
          </BookmarksBar>
          <Viewport>
            <Page>
              <Navbar>
                <Brand>Inicio</Brand>
                <NavLink>Examen final JSP</NavLink>
                <NavLink>Carlos Arias</NavLink>
              </Navbar>
              <TitleCard>
                <Title>Tabla Personas</Title>
                <PageButton>Agregar nuevo</PageButton>
              </TitleCard>
              <Table>
                <HeadRow><span>ID</span><span>NOMBRE</span><span>CORREO</span><span>ACCIONES</span></HeadRow>
                {people.map(([id, name, mail]) => (
                  <Row key={id}>
                    <span>{id}</span>
                    <span>{name}</span>
                    <span>{mail}</span>
                    <Actions><PageButton $large>Editar</PageButton><PageButton $large>Eliminar</PageButton></Actions>
                  </Row>
                ))}
                <Row />
              </Table>
            </Page>
            <Scrollbar>
              <svg width="11" height="9" viewBox="0 0 11 9"><path d="M5.500 0L11 9H0z" fill="#8b8b8b" /></svg>
              <Thumb />
              <svg width="11" height="9" viewBox="0 0 11 9"><path d="M0 0h11L5.500 9z" fill="#8b8b8b" /></svg>
            </Scrollbar>
          </Viewport>
        </MainColumn>
        <Sidebar>
          <BingSlot><BingBubble s={38} dark /></BingSlot>
          <SidebarRail>
            <RailItem><BellIcon /></RailItem>
            {railIcons.map((icon, i) => <RailItem key={i}>{icon}</RailItem>)}
            <RailItem $h={58}><PlusIcon s={14} /></RailItem>
            <RailFooter>
              <RailLine />
              <RailItem $h={55}><PanelIcon /></RailItem>
              <RailItem $h={47}><GearIcon /></RailItem>
            </RailFooter>
          </SidebarRail>
        </Sidebar>
      </BrowserBody>

      <Taskbar>
        <Weather>
          <WindIcon />
          <TwoLines $ls={0.1}>31°C<Muted>Ventoso</Muted></TwoLines>
        </Weather>
        <Slot $w={45}><WindowsIcon /></Slot>
        <SearchBox>
          <Line w={18} h={18} sw={2.2} color="#222"><circle cx="8" cy="8" r="7" /><path d="M13 13l4.300 4.300" /></Line>
          <span>Buscar</span>
          <BingBubble s={25} />
        </SearchBox>
        {apps.map((a, i) => (
          <AppSlot key={i}>
            <AppTile $active={a.active}>
              {a.icon}
              {a.running && <RunMark $active={a.active} />}
            </AppTile>
          </AppSlot>
        ))}
        <Tray>
          <Slot $w={48}><Line w={13} h={7} sw={1.8}><path d="M0 7l6.500-6L13 7" /></Line></Slot>
          <Slot $w={32}><CloudIcon /></Slot>
          <Slot $w={64}><TwoLines $align="center">ESP<br />LAA</TwoLines></Slot>
          <Slot $w={30}><WifiIcon /></Slot>
          <Slot $w={30}><VolumeIcon /></Slot>
          <Slot $w={30}><BatteryIcon /></Slot>
          <Clock><TwoLines $align="right" $ls={0.2}>10:41 p. m.<br />26/06/2023</TwoLines></Clock>
          <Notice>1</Notice>
        </Tray>
      </Taskbar>
    </Desktop>
  );
}
